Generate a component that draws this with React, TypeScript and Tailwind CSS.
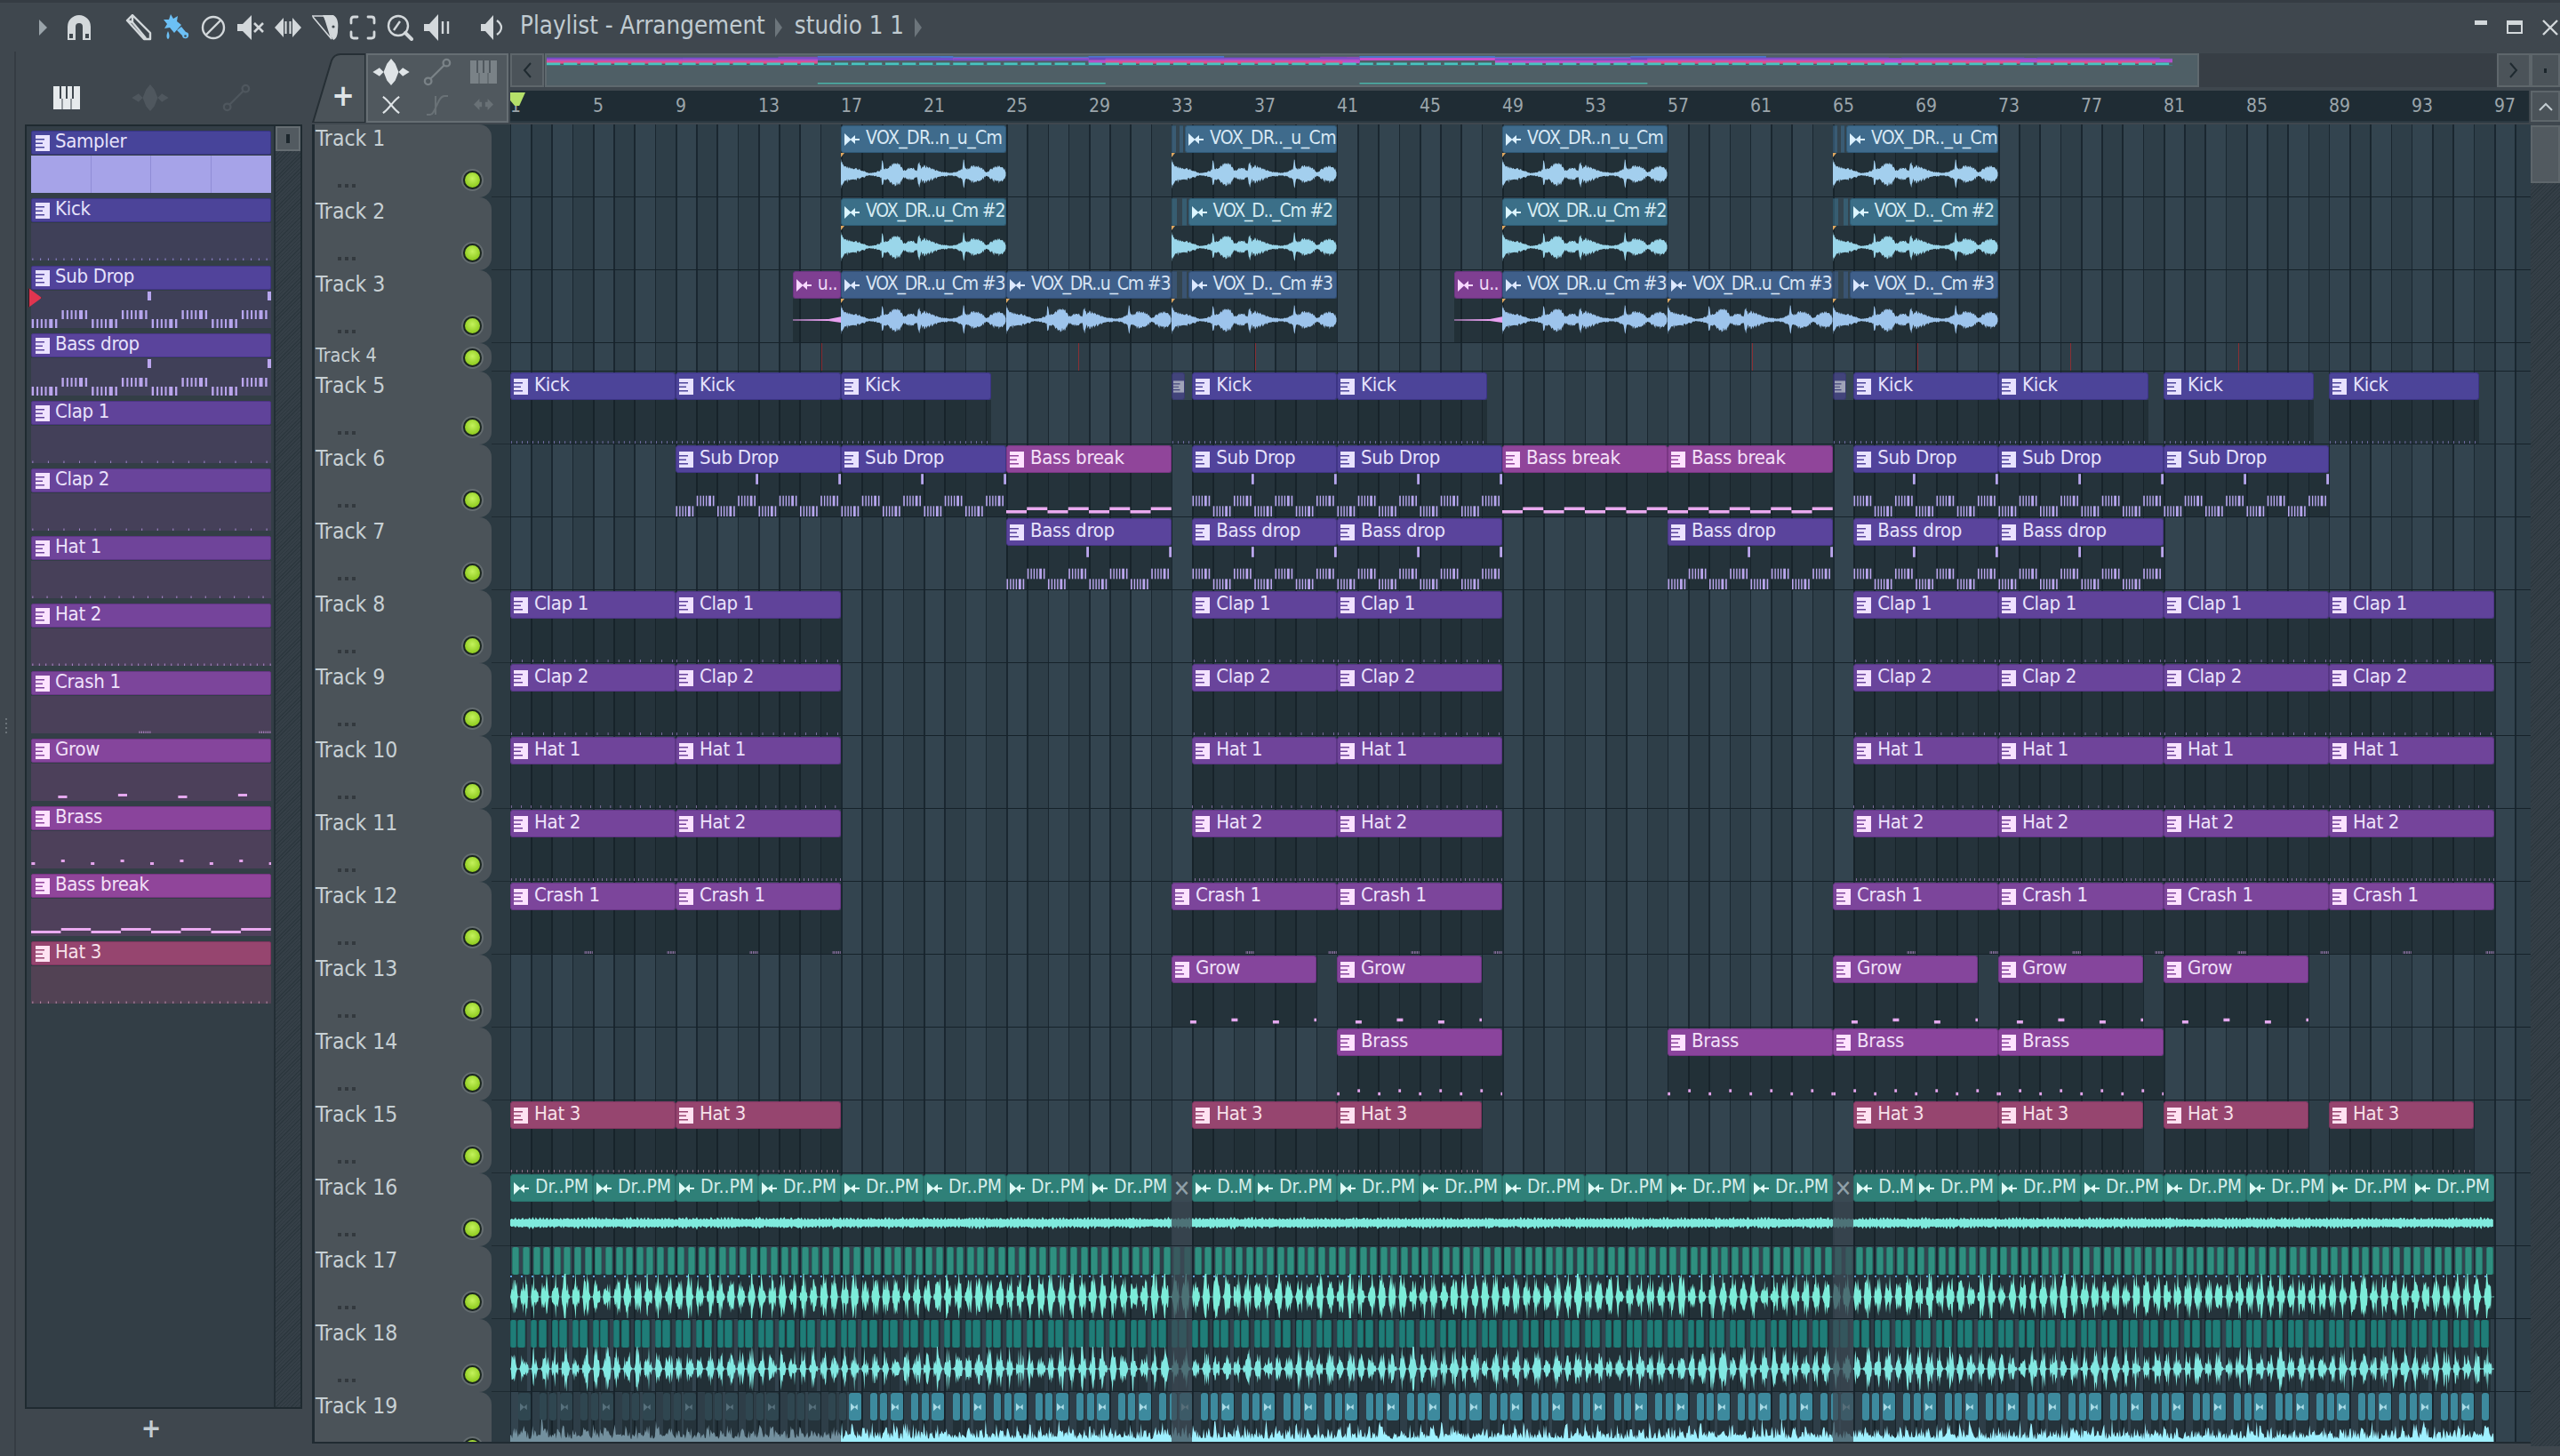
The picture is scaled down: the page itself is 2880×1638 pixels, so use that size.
import React from "react";

const BAR = 23.25;
const barX = (b: number) => (b - 1) * BAR;

// seeded noise so the waves stay the same every render
let seed = 7;
const rnd = () => {
  seed = (seed * 9301 + 49297) % 233280;
  return seed / 233280;
};

type Tone = { hd: string; text: string; icon: string; note: string; ov: string };

const TONES: Record<string, Tone> = {
  vox1: { hd: "bg-[#3f6b8c] border-[#2f5876]", text: "text-[#d8e8f4]", icon: "#dcf1ff", note: "#a3cfee", ov: "#4a78c8" },
  vox2: { hd: "bg-[#3b6f88] border-[#2d5c74]", text: "text-[#d6ebf2]", icon: "#dcf6ff", note: "#9ad6ea", ov: "#4a78c8" },
  vox3: { hd: "bg-[#3f5f8a] border-[#314e76]", text: "text-[#d8e4f4]", icon: "#dce8ff", note: "#9dc4ec", ov: "#4a78c8" },
  uu: { hd: "bg-[#7f3f92] border-[#6a3380]", text: "text-[#f0d8f6]", icon: "#f8d8ff", note: "#e8a0f0", ov: "#8a50b0" },
  Kick: { hd: "bg-[#4c4499] border-[#3b3484]", text: "text-[#e6e2fb]", icon: "#e8e2ff", note: "#8e86cc", ov: "#6a4cc0" },
  "Sub Drop": { hd: "bg-[#51439b] border-[#403585]", text: "text-[#e6e2fb]", icon: "#e8e2ff", note: "#b7a6ee", ov: "#7050c8" },
  "Bass drop": { hd: "bg-[#5a449c] border-[#483686]", text: "text-[#e6e2fb]", icon: "#ebe2ff", note: "#bba6ee", ov: "#7a50c8" },
  "Clap 1": { hd: "bg-[#60439a] border-[#4e3586]", text: "text-[#e9e2fb]", icon: "#f0e2ff", note: "#9c86c8", ov: "#8a50c8" },
  "Clap 2": { hd: "bg-[#69449b] border-[#573685]", text: "text-[#ebe2fb]", icon: "#f4e2ff", note: "#a086c8", ov: "#9050c8" },
  "Hat 1": { hd: "bg-[#6f449a] border-[#5c3685]", text: "text-[#ece2fb]", icon: "#f8e2ff", note: "#a688c8", ov: "#a050c8" },
  "Hat 2": { hd: "bg-[#75449b] border-[#623685]", text: "text-[#eee2fb]", icon: "#fbe2ff", note: "#ac88c8", ov: "#a850c8" },
  "Crash 1": { hd: "bg-[#7c459b] border-[#683685]", text: "text-[#efe2fb]", icon: "#fde2ff", note: "#b48ac8", ov: "#b050c8" },
  Grow: { hd: "bg-[#85459c] border-[#703686]", text: "text-[#f0e0f8]", icon: "#fde2ff", note: "#e4a8ee", ov: "#b850c8" },
  Brass: { hd: "bg-[#8a449c] border-[#753686]", text: "text-[#f2e0f8]", icon: "#ffe2ff", note: "#e4a4ec", ov: "#c050c8" },
  "Bass break": { hd: "bg-[#90459a] border-[#7a3684]", text: "text-[#f4e0f8]", icon: "#ffe2ff", note: "#eaaaf0", ov: "#c850c8" },
  "Hat 3": { hd: "bg-[#96456f] border-[#803560]", text: "text-[#f6e0ea]", icon: "#ffe2f2", note: "#b98aa8", ov: "#e0508c" },
  Sampler: { hd: "bg-[#47449a] border-[#373484]", text: "text-[#e6e2fb]", icon: "#e8e2ff", note: "#a6a3e8", ov: "#5a4cc0" },
};

// one pattern is 8 bars, 100 units to the bar; y runs 0..42
type Note = [number, number, number, number];

const melody = (): Note[] => {
  const out: Note[] = [];
  const gaps = [[2, 7], [18, 6], [32, 6], [46, 6], [60, 12], [80, 7]];
  for (let k = 0; k < 17; k++) {
    const up = k % 2 === 1;
    gaps.forEach(([g, w]) => out.push([k * 100 + g, up ? 22 : 32, w, 10]));
    if (k % 4 === 3) out.push([k * 100 + 88, 1, 12, 10]);
  }
  return out;
};

const ticks = (step: number, h = 2.5, w = 3): Note[] => {
  const out: Note[] = [];
  for (let x = 4; x < 1700; x += step) out.push([x, 42 - h, w, h]);
  return out;
};

const crash = (): Note[] => {
  const out: Note[] = [];
  [360, 760, 1160, 1560].forEach((c) => {
    for (let i = 0; i < 6; i++) out.push([c + i * 7, 39.5, 3, 2.5]);
  });
  return out;
};

const grow = (): Note[] =>
  [0.9, 2.9, 4.9, 6.9, 8.9, 10.9, 12.9, 14.9].map((b, i) => [b * 100, i % 2 ? 34 : 36, 30, 3] as Note);

const brass = (): Note[] =>
  Array.from({ length: 17 }, (_, i) => [i * 99 + 1, i % 2 ? 32 : 35, 12, 3] as Note);

const bassBreak = (): Note[] =>
  Array.from({ length: 17 }, (_, i) => [i * 100, i % 2 ? 33 : 36, 99, 3] as Note);

const PATTERNS: Record<string, Note[]> = {
  Kick: ticks(26),
  "Sub Drop": melody(),
  "Bass drop": melody(),
  "Clap 1": ticks(52),
  "Clap 2": ticks(52),
  "Hat 1": ticks(48),
  "Hat 2": ticks(22),
  "Crash 1": crash(),
  Grow: grow(),
  Brass: brass(),
  "Bass break": bassBreak(),
  "Hat 3": ticks(26),
};

// vocal wave loudness over the 8 bar sample
const ENV: [number, number][] = [
  [0, 0.95], [0.02, 0.48], [0.05, 0.38], [0.09, 0.36], [0.13, 0.2], [0.17, 0.07], [0.2, 0.1], [0.23, 0.2],
  [0.245, 0.3], [0.25, 1], [0.262, 0.3], [0.3, 0.52], [0.33, 0.62], [0.36, 0.55], [0.38, 0.22], [0.4, 0.3], [0.43, 0.42],
  [0.46, 0.18], [0.47, 0.75], [0.485, 0.4], [0.5, 0.5], [0.53, 0.42], [0.56, 0.3], [0.6, 0.16], [0.66, 0.08], [0.7, 0.16],
  [0.735, 0.3], [0.74, 1], [0.755, 0.32], [0.8, 0.46], [0.83, 0.52], [0.86, 0.3], [0.88, 0.12], [0.93, 0.42], [0.96, 0.46],
  [0.99, 0.3], [1, 0.05],
];

const envAt = (f: number) => {
  for (let i = 1; i < ENV.length; i++) {
    if (f <= ENV[i][0]) {
      const [a, av] = ENV[i - 1];
      const [b, bv] = ENV[i];
      return av + ((f - a) / (b - a)) * (bv - av);
    }
  }
  return 0;
};

const mirrored = (from: number, to: number, step: number, c: number, amp: (x: number) => number) => {
  const top: string[] = [];
  const bot: string[] = [];
  for (let x = from; x <= to; x += step) {
    const a = amp(x);
    top.push(`${x.toFixed(1)} ${(c - a).toFixed(1)}`);
    bot.unshift(`${x.toFixed(1)} ${(c + a * (0.75 + rnd() * 0.35)).toFixed(1)}`);
  }
  return `M${top.join("L")}L${bot.join("L")}Z`;
};

const VOX_PATH = mirrored(0, 186, 0.7, 25, (x) => {
  const e = envAt(x / 186);
  return 21 * e * (0.72 + rnd() * 0.4);
});

const END = barX(97);
const T16_PATH = mirrored(0, END, 1.2, 25, (x) => 3.4 + 2.8 * Math.abs(Math.sin(x * 0.8)) * (0.4 + rnd()));
const T17_PATH = mirrored(0, END, 0.8, 26, (x) => {
  const p = (x % (BAR / 2)) / (BAR / 2);
  const e = p < 0.72 ? Math.pow(Math.sin((Math.PI * p) / 0.72), 0.6) : 0.02;
  const spike = rnd() > 0.8 ? 1.3 : 0.25 + rnd() * 0.75;
  return 22 * e * spike;
});
const T18_PATH = mirrored(0, END, 0.8, 25, (x) => {
  const p = (x % BAR) / BAR;
  const spike = rnd() > 0.8 ? 1.25 : 0.2 + rnd() * 0.7;
  if (p < 0.34) return 21 * Math.sin((Math.PI * p) / 0.34) * spike;
  if (p > 0.46 && p < 0.9) return 21 * Math.sin((Math.PI * (p - 0.46)) / 0.44) * spike;
  return 0.6;
});

const spikes = (from: number, to: number) => {
  let d = `M${from} 34`;
  for (let x = from; x <= to; x += 1.1) {
    const p = (x % (BAR / 2)) / (BAR / 2);
    const h = (1 - p * 0.75) * 25 * rnd() * (0.5 + rnd() * 0.6) + 5;
    d += `L${x.toFixed(1)} ${(27 - h).toFixed(1)}`;
  }
  return `${d}L${to} 34Z`;
};
const T19_DIM = spikes(0, barX(17));
const T19_LIT = spikes(barX(17), END);

type ClipData = { s: number; e: number; hs?: number; label: string; kind: "midi" | "audio"; tone: string; frag?: boolean };
type Track = { n: number; small?: boolean; clips: ClipData[] };

const midi = (name: string, spans: number[][]): ClipData[] =>
  spans.map(([s, e, hs]) => ({ s, e, hs, label: name, kind: "midi" as const, tone: name, frag: hs !== undefined && name === "Kick" }));

const vox = (tone: string, a: string, b: string, spans: number[][]): ClipData[] =>
  spans.map(([s, e, hs]) => ({ s, e, hs, label: hs ? b : a, kind: "audio" as const, tone, frag: !!hs }));

const FULL = [[1, 9], [9, 17], [34, 41], [41, 49], [66, 73], [73, 81], [81, 89], [89, 97]];

const T1_SPANS = [[17, 25], [33, 41, 33.8], [49, 57], [65, 73, 65.8]];

const tracks: Track[] = [
  {
    n: 1,
    clips: [
      { s: 17, e: 25, label: "VOX_DR..n_u_Cm", kind: "audio", tone: "vox1" },
      { s: 33, e: 41, hs: 33.8, label: "VOX_DR.._u_Cm", kind: "audio", tone: "vox1", frag: true },
      { s: 49, e: 57, label: "VOX_DR..n_u_Cm", kind: "audio", tone: "vox1" },
      { s: 65, e: 73, hs: 65.8, label: "VOX_DR.._u_Cm", kind: "audio", tone: "vox1", frag: true },
    ],
  },
  { n: 2, clips: vox("vox2", "VOX_DR..u_Cm #2", "VOX_D.._Cm #2", T1_SPANS) },
  {
    n: 3,
    clips: [
      { s: 14.67, e: 17, label: "u..", kind: "audio", tone: "uu" },
      ...vox("vox3", "VOX_DR..u_Cm #3", "VOX_D.._Cm #3", [[17, 25], [25, 33], [33, 41, 33.8]]),
      { s: 46.67, e: 49, label: "u..", kind: "audio", tone: "uu" },
      ...vox("vox3", "VOX_DR..u_Cm #3", "VOX_D.._Cm #3", [[49, 57], [57, 65], [65, 73, 65.8]]),
    ],
  },
  { n: 4, small: true, clips: [] },
  {
    n: 5,
    clips: midi("Kick", [[1, 9], [9, 17], [17, 24.25], [33, 41, 34], [41, 48.25], [65, 73, 66], [73, 80.25], [81, 88.25], [89, 96.25]]),
  },
  {
    n: 6,
    clips: [
      ...midi("Sub Drop", [[9, 17], [17, 25]]),
      ...midi("Bass break", [[25, 33]]),
      ...midi("Sub Drop", [[34, 41], [41, 49]]),
      ...midi("Bass break", [[49, 57], [57, 65]]),
      ...midi("Sub Drop", [[66, 73], [73, 81], [81, 89]]),
    ],
  },
  { n: 7, clips: midi("Bass drop", [[25, 33], [34, 41], [41, 49], [57, 65], [66, 73], [73, 81]]) },
  { n: 8, clips: midi("Clap 1", FULL) },
  { n: 9, clips: midi("Clap 2", FULL) },
  { n: 10, clips: midi("Hat 1", FULL) },
  { n: 11, clips: midi("Hat 2", FULL) },
  { n: 12, clips: midi("Crash 1", [[1, 9], [9, 17], [33, 41], [41, 49], [65, 73], [73, 81], [81, 89], [89, 97]]) },
  { n: 13, clips: midi("Grow", [[33, 40], [41, 48], [65, 72], [73, 80], [81, 88]]) },
  { n: 14, clips: midi("Brass", [[41, 49], [57, 65], [65, 73], [73, 81]]) },
  { n: 15, clips: midi("Hat 3", [[1, 9], [9, 17], [34, 41], [41, 48], [66, 73], [73, 80], [81, 88], [89, 96]]) },
  { n: 16, clips: [] },
  { n: 17, clips: [] },
  { n: 18, clips: [] },
  { n: 19, clips: [] },
];

const DRUM_STARTS = [1, 5, 9, 13, 17, 21, 25, 29, 34, 37, 41, 45, 49, 53, 57, 61, 66, 69, 73, 77, 81, 85, 89, 93];
const RED_TICKS = [16.05, 28.5, 37.05, 61.1, 69.1, 76.5, 84.6];
const LIST = ["Sampler", "Kick", "Sub Drop", "Bass drop", "Clap 1", "Clap 2", "Hat 1", "Hat 2", "Crash 1", "Grow", "Brass", "Bass break", "Hat 3"];
const LIST_BODY: Record<string, string> = {
  Sampler: "bg-[#a6a3e8]",
  Kick: "bg-[#3f4058]",
  "Sub Drop": "bg-[#3f4058]",
  "Bass drop": "bg-[#404058]",
  "Clap 1": "bg-[#434059]",
  "Clap 2": "bg-[#454059]",
  "Hat 1": "bg-[#474059]",
  "Hat 2": "bg-[#494059]",
  "Crash 1": "bg-[#4a4059]",
  Grow: "bg-[#4c405a]",
  Brass: "bg-[#4d405a]",
  "Bass break": "bg-[#4f405b]",
  "Hat 3": "bg-[#524254]",
};

const PianoGlyph = ({ color, className = "" }: { color: string; className?: string }) => (
  <svg viewBox="0 0 16 18" className={`w-[16px] h-[18px] shrink-0 ${className}`}>
    <path fillRule="evenodd" fill={color} d="M0 0H16V18H0ZM0 4H10V5.5H0ZM0 8.5H8V10H0ZM0 13H10V14.5H0Z" />
  </svg>
);

const AudioGlyph = ({ color }: { color: string }) => (
  <svg viewBox="0 0 17 14" className="w-[17px] h-[14px] shrink-0">
    <path fill={color} d="M0 0L7.5 7L0 14ZM6.5 7L12 2V6H17V8H12V12Z" />
  </svg>
);

const Notes = ({ name, off, len }: { name: string; off: number; len: number }) => (
  <svg viewBox={`${off * 100} 0 ${len * 100} 42`} preserveAspectRatio="none" className="absolute inset-0 w-full h-full">
    {(PATTERNS[name] ?? []).map(([x, y, w, h], i) => (
      <rect key={i} x={x} y={y} width={w} height={h} fill={TONES[name].note} />
    ))}
  </svg>
);

function ClipView({ c }: { c: ClipData }) {
  const t = TONES[c.tone];
  const hs = c.hs ?? c.s;
  const offset = (hs - c.s) * BAR;
  const squeeze = c.kind !== "audio" ? "text-[22px] tracking-[-0.3px]" : c.label.includes("#") ? "text-[21px] tracking-[-1.2px]" : "text-[21px] tracking-[-0.6px]";
  return (
    <div className="absolute top-0 bottom-0 flex flex-col" style={{ left: barX(c.s), width: (c.e - c.s) * BAR }}>
      <div className="h-[31px] mt-px shrink-0 flex">
        {c.frag && c.kind === "audio" && (
          <>
            <div className={`w-[6px] border-y ${t.hd} opacity-60`} />
            <div className="w-[6px]" />
            <div className={`w-[5px] border-y ${t.hd} opacity-60`} />
          </>
        )}
        {c.frag && c.kind === "midi" && (
          <div className={`w-[15px] border rounded-[3px] ${t.hd} opacity-60 flex items-center justify-center`}>
            <PianoGlyph color={t.icon} className="scale-75" />
          </div>
        )}
        <div className="flex-1 flex" style={{ marginLeft: c.frag ? offset - (c.kind === "audio" ? 17 : 15) : 0 }}>
          <div className={`flex-1 min-w-0 flex items-center gap-[7px] pl-[3px] border rounded-[3px] ${t.hd} overflow-hidden`}>
            {c.kind === "midi" ? <PianoGlyph color={t.icon} /> : <AudioGlyph color={t.icon} />}
            <span className={`leading-[26px] mb-[4px] whitespace-nowrap ${squeeze} ${t.text}`}>{c.label}</span>
          </div>
        </div>
      </div>
      <div className="relative flex-1 bg-[#141e24]/45">
        {c.kind === "midi" ? (
          <Notes name={c.tone} off={(c.s - 1) % 8} len={c.e - c.s} />
        ) : c.tone === "uu" ? (
          <svg viewBox="0 0 54 51" preserveAspectRatio="none" className="absolute inset-0 w-full h-full">
            <path fill={t.note} d="M0 24.5L40 24L54 21V28L40 26L0 25.5Z" />
          </svg>
        ) : (
          <>
            <svg viewBox="0 0 186 51" preserveAspectRatio="none" className="absolute inset-0 w-full h-full">
              <path fill={t.note} d={VOX_PATH} />
            </svg>
            <div className="absolute top-0 left-0 w-0 h-0 border-t-[5px] border-r-[4px] border-t-[#e0a860] border-r-transparent" />
          </>
        )}
      </div>
    </div>
  );
}

const MutedBand = () => (
  <>
    <div className="absolute top-0 bottom-0 bg-[#3c4a54]/75" style={{ left: barX(33), width: BAR }} />
    <div className="absolute top-0 bottom-0 bg-[#3c4a54]/75" style={{ left: barX(65), width: BAR }} />
  </>
);

function DrumLane() {
  return (
    <>
      <div className="absolute left-0 top-[31px] bottom-0 bg-[#141e24]/45" style={{ width: END }} />
      {DRUM_STARTS.map((s) => {
        const short = s === 34 || s === 66;
        return (
          <div
            key={s}
            className="absolute top-px h-[31px] flex items-center gap-[7px] pl-[3px] border rounded-[3px] bg-[#2f8078] border-[#28706a] overflow-hidden"
            style={{ left: barX(s), width: short ? 3 * BAR : 4 * BAR }}
          >
            <AudioGlyph color="#dffaf6" />
            <span className={`text-[21px] leading-[26px] mb-[4px] text-[#d4ece8] whitespace-nowrap ${short ? "tracking-[-1px]" : ""}`}>
              {short ? "D..M" : "Dr..PM"}
            </span>
          </div>
        );
      })}
      {[33, 65].map((s) => (
        <div
          key={s}
          className="absolute top-px h-[31px] rounded-[3px] bg-[#3a4a53] flex items-center justify-center text-[26px] leading-none text-[#8fa0a8]"
          style={{ left: barX(s), width: BAR }}
        >
          ✕
        </div>
      ))}
      <svg viewBox={`0 0 ${END} 51`} preserveAspectRatio="none" className="absolute left-0 top-[31px] h-[51px]" style={{ width: END }}>
        <path fill="#7feadd" d={T16_PATH} />
      </svg>
      <div className="absolute top-[31px] bottom-0 bg-[#3c4a54]/75" style={{ left: barX(33), width: BAR }} />
      <div className="absolute top-[31px] bottom-0 bg-[#3c4a54]/75" style={{ left: barX(65), width: BAR }} />
    </>
  );
}

function HalfBarLane() {
  const starts = Array.from({ length: 192 }, (_, i) => 1.1 + i / 2);
  return (
    <>
      <div className="absolute left-0 top-[31px] bottom-0 bg-[#141e24]/45" style={{ width: END }} />
      {starts.map((s, i) => (
        <div
          key={i}
          className="absolute top-px h-[31px] w-[8px] rounded-[2px] bg-[#2f8f80] border-x border-[#247568]"
          style={{ left: barX(s) }}
        />
      ))}
      {starts.map((s, i) => (
        <div key={i} className="absolute top-[33px] w-[2px] h-[2px] bg-[#5aa0e0]" style={{ left: barX(s) - 2 }} />
      ))}
      <svg viewBox={`0 0 ${END} 51`} preserveAspectRatio="none" className="absolute left-0 top-[31px] h-[51px]" style={{ width: END }}>
        <path fill="#7cecd9" d={T17_PATH} />
      </svg>
      <MutedBand />
    </>
  );
}

function DoubleLane() {
  const segs: [number, number][] = [];
  for (let b = 1; b < 97; b++) {
    segs.push([b, 7], [b + 0.36, 9]);
  }
  return (
    <>
      {segs.map(([s, w], i) => (
        <div key={i} className="absolute top-0 bottom-0 bg-[#141e24]/45" style={{ left: barX(s), width: w + 2 }}>
          <div className="mt-px h-[31px] rounded-[2px] bg-[#1f7d78] border-x border-[#1a6a66]" style={{ width: w }} />
        </div>
      ))}
      <svg viewBox={`0 0 ${END} 51`} preserveAspectRatio="none" className="absolute left-0 top-[31px] h-[51px]" style={{ width: END }}>
        <path fill="#82e8e2" d={T18_PATH} />
      </svg>
      <MutedBand />
    </>
  );
}

function SliceLane() {
  const segs: { s: number; w: number; wide: boolean }[] = [];
  for (let b = 0; b < 96; b += 2) {
    segs.push({ s: b + 1.4, w: 14, wide: true }, { s: b + 2.4, w: 8, wide: false });
    if (b + 2.9 < 96.6) segs.push({ s: b + 2.9, w: 8, wide: false });
  }
  return (
    <>
      {segs.map(({ s, w, wide }, i) => {
        const lit = s >= 17;
        return (
          <div key={i} className="absolute top-0 bottom-0 bg-[#141e24]/45" style={{ left: barX(s), width: w + 1 }}>
            <div
              className={`mt-px h-[31px] rounded-[3px] flex items-center justify-center ${lit ? "bg-[#3d8a9e]" : "bg-[#2f4650]"}`}
              style={{ width: w }}
            >
              {wide && (
                <svg viewBox="0 0 17 14" className="w-[11px] h-[14px]">
                  <path fill={lit ? "#a9dbe6" : "#57707c"} d="M0 0L7.5 7L0 14ZM6.5 7L12 2V12Z" />
                </svg>
              )}
            </div>
          </div>
        );
      })}
      <svg viewBox={`0 0 ${END} 51`} preserveAspectRatio="none" className="absolute left-0 top-[31px] h-[51px]" style={{ width: END }}>
        <path fill="#73909e" d={T19_DIM} />
        <path fill="#9ff0ff" d={T19_LIT} />
      </svg>
      <MutedBand />
    </>
  );
}

const Led = () => (
  <div className="w-[21px] h-[21px] rounded-full border-2 border-[#1b2620] ring-2 ring-[#646c70] bg-[radial-gradient(circle_at_50%_40%,#c4f25c,#8ecb1e_75%)]" />
);

function TrackRow({ t }: { t: Track }) {
  return (
    <div className={`flex shrink-0 ${t.small ? "h-[32px]" : "h-[82px]"}`}>
      {t.small ? (
        <div className="w-[199px] shrink-0 bg-[#4b5359] rounded-r-[14px] flex items-center justify-between pl-[1px] pr-[11px]">
          <span className="text-[21.5px] leading-none mb-[4px] text-[#c7d0d4]">Track {t.n}</span>
          <Led />
        </div>
      ) : (
        <div className="w-[199px] shrink-0 bg-[#4b5359] rounded-r-[14px] flex flex-col pl-[1px] pr-[11px] pb-[9px]">
          <span className="text-[24.5px] leading-[26px] mt-[3px] text-[#c7d0d4]">Track {t.n}</span>
          <div className="mt-auto flex items-end justify-between">
            <div className="flex gap-[4px] ml-[25px] mb-[2px]">
              <div className="w-[4px] h-[4px] bg-[#33393e]" />
              <div className="w-[4px] h-[4px] bg-[#33393e]" />
              <div className="w-[4px] h-[4px] bg-[#33393e]" />
            </div>
            <Led />
          </div>
        </div>
      )}
      <div className="w-[21px] shrink-0 border-b border-[#1d2a31]" />
      <div className="relative flex-1 border-b border-[#16222a] overflow-hidden bg-[repeating-linear-gradient(90deg,#1a2730_0,#1a2730_1.5px,#33444f_1.5px,#33444f_23.25px,#1a2730_23.25px,#1a2730_24.75px,#2e3e48_24.75px,#2e3e48_46.5px)]">
        {t.n === 4 &&
          RED_TICKS.map((b) => <div key={b} className="absolute top-0 bottom-0 w-px bg-[#8a2f34]" style={{ left: barX(b) }} />)}
        {t.clips.map((c, i) => (
          <ClipView key={i} c={c} />
        ))}
        {t.n === 16 && <DrumLane />}
        {t.n === 17 && <HalfBarLane />}
        {t.n === 18 && <DoubleLane />}
        {t.n === 19 && <SliceLane />}
      </div>
    </div>
  );
}

function ListItem({ name }: { name: string }) {
  const t = TONES[name];
  return (
    <div className="h-[70px] shrink-0 flex flex-col">
      <div className={`h-[27px] shrink-0 flex items-center gap-[6px] pl-[4px] border rounded-[2px] ${t.hd}`}>
        <PianoGlyph color={t.icon} />
        <span className={`text-[22px] tracking-[-0.3px] leading-[26px] mb-[4px] ${t.text}`}>{name}</span>
      </div>
      <div className={`relative flex-1 mt-px ${LIST_BODY[name]}`}>
        {name === "Sampler" ? (
          <div className="absolute inset-0 grid grid-cols-4 divide-x divide-[#8f8cd6]">
            <div />
            <div />
            <div />
            <div />
          </div>
        ) : (
          <Notes name={name} off={0} len={8} />
        )}
        {name === "Sub Drop" && (
          <div className="absolute left-[-3px] top-[-3px] w-[15px] h-[22px] bg-[#e0354f] border border-[#3a1a22] [clip-path:polygon(0_0,100%_50%,0_100%)]" />
        )}
      </div>
    </div>
  );
}

const C = "#d3d8db";

const TopIcon = ({ children, className = "" }: { children: React.ReactNode; className?: string }) => (
  <svg viewBox="0 0 30 30" className={`w-[30px] h-[30px] shrink-0 ${className}`}>
    {children}
  </svg>
);

const WaveIcon = ({ color, className = "" }: { color: string; className?: string }) => (
  <svg viewBox="0 0 44 32" className={`w-[42px] h-[30px] ${className}`}>
    <path fill={color} d="M0 16L8 11L13 16L17 6L22 0L27 6L31 16L36 11L44 16L36 21L31 16L27 26L22 32L17 26L13 16L8 21Z" />
  </svg>
);

const LinkIcon = ({ color, className = "" }: { color: string; className?: string }) => (
  <svg viewBox="0 0 34 34" className={`w-[32px] h-[32px] ${className}`} fill="none" stroke={color} strokeWidth="2.5">
    <circle cx="6" cy="28" r="4" />
    <circle cx="28" cy="6" r="4" />
    <path d="M9 25L25 9" />
  </svg>
);

const PianoIcon = ({ color, bg, className = "" }: { color: string; bg: string; className?: string }) => (
  <svg viewBox="0 0 30 26" className={`w-[30px] h-[26px] ${className}`}>
    <rect width="30" height="26" fill={color} />
    <rect x="7" y="0" width="2" height="14" fill={bg} />
    <rect x="14" y="0" width="2" height="14" fill={bg} />
    <rect x="21" y="0" width="2" height="14" fill={bg} />
    <rect x="9.5" y="14" width="1" height="12" fill={bg} />
    <rect x="19.5" y="14" width="1" height="12" fill={bg} />
  </svg>
);

function TitleBar() {
  return (
    <div className="h-[58px] shrink-0 flex items-center border-t-[3px] border-[#353c43] pl-[33px] pr-[2px]">
      <TopIcon>
        <path fill="#9aa4aa" d="M11 6L20 15L11 24Z" />
      </TopIcon>
      <TopIcon className="ml-[11px]">
        <path fill={C} d="M2 29V14a13 13 0 0 1 26 0V29H19V14a4 4 0 0 0-8 0V29Z" />
        <path fill="#3f474e" d="M4 22H8V27H4ZM22 22H26V27H22Z" />
      </TopIcon>
      <div className="flex items-center gap-[12px] ml-[37px]">
        <TopIcon>
          <path fill="none" stroke={C} strokeWidth="2.4" strokeLinejoin="round" d="M2 7L8 1L28 21V28H21ZM2 7L8 9L8 1M8 9L23 27" />
        </TopIcon>
        <TopIcon>
          <path fill="#6cc0f5" d="M9 0L12 5L17 2L16 8L21 12L13 21L8 15L2 16L5 11L1 6L7 6ZM16 18L21 14L26 20A3.6 3.6 0 1 1 22 24ZM6 19C8 23 8 27 6 28C4 27 4 23 6 19Z" />
          <circle cx="25.5" cy="24.5" r="1.3" fill="#3f474e" />
        </TopIcon>
        <TopIcon>
          <circle cx="15" cy="15" r="12" fill="none" stroke={C} strokeWidth="2.4" />
          <path d="M7 23L23 7" stroke={C} strokeWidth="2.4" />
        </TopIcon>
        <TopIcon>
          <path fill={C} d="M0 11H6L16 1V29L6 19H0Z" />
          <path stroke={C} strokeWidth="2.6" d="M19 10L29 20M29 10L19 20" />
        </TopIcon>
        <TopIcon>
          <path fill={C} d="M0 15L10 4V26ZM30 15L20 4V26Z" />
          <path stroke={C} strokeWidth="2.2" d="M12.5 8V22M17.5 8V22" />
        </TopIcon>
        <TopIcon>
          <path fill="none" stroke={C} strokeWidth="1.6" d="M0 2H14L22 28L1 3" />
          <path fill={C} d="M12 1H24C29 4 30 10 29 18C29 24 27 28 24 29C21 25 19 18 16 9Z" />
          <circle cx="24" cy="14" r="1.6" fill="#3f474e" />
        </TopIcon>
        <TopIcon>
          <path fill="none" stroke={C} strokeWidth="2.8" strokeLinecap="round" d="M9 3H5Q2 3 2 6V10M21 3H25Q28 3 28 6V10M9 27H5Q2 27 2 24V20M21 27H25Q28 27 28 24V20" />
        </TopIcon>
        <TopIcon>
          <circle cx="13" cy="13" r="11" fill="none" stroke={C} strokeWidth="2.4" />
          <path d="M8 18L15 8" stroke={C} strokeWidth="2.4" />
          <path d="M21 21L28 28" stroke={C} strokeWidth="4" strokeLinecap="round" />
        </TopIcon>
        <TopIcon>
          <path fill={C} d="M0 11H6L16 0V30L6 19H0Z" />
          <path stroke={C} strokeWidth="2.4" d="M21 8V22M27 8V22" />
        </TopIcon>
      </div>
      <TopIcon className="ml-[33px]">
        <path fill={C} d="M1 11H6L15 1V29L6 19H1Z" />
        <path fill="none" stroke={C} strokeWidth="2.2" d="M19 7C23 10 24 12 24 15C24 18 23 20 19 23" />
      </TopIcon>
      <span className="ml-[15px] text-[27.5px] leading-none mb-[4px] text-[#c0cbd1] whitespace-nowrap">Playlist - Arrangement</span>
      <svg viewBox="0 0 8 24" className="w-[8px] h-[24px] ml-[11px]">
        <path fill="#6c757b" d="M0 1L8 12L0 23Z" />
      </svg>
      <span className="ml-[14px] text-[27.5px] leading-none mb-[4px] text-[#c0cbd1] whitespace-nowrap">studio 1 1</span>
      <svg viewBox="0 0 8 24" className="w-[8px] h-[24px] ml-[12px]">
        <path fill="#6c757b" d="M0 1L8 12L0 23Z" />
      </svg>
      <div className="ml-auto flex items-center gap-[22px]">
        <div className="w-[14px] h-[5px] bg-[#d3d8db] mb-[10px]" />
        <div className="w-[18px] h-[15px] border-2 border-t-[5px] border-[#d3d8db]" />
        <svg viewBox="0 0 18 18" className="w-[18px] h-[18px]">
          <path stroke="#d3d8db" strokeWidth="2.4" d="M1 1L17 17M17 1L1 17" />
        </svg>
      </div>
    </div>
  );
}

function LeftPanel() {
  return (
    <div className="w-[351px] shrink-0 flex pl-[16px] relative">
      <div className="w-[2px] bg-[#353c43]" />
      <div className="flex-1 flex flex-col pl-[10px]">
        <div className="h-[82px] shrink-0 flex items-center">
          <PianoIcon color="#e6eaec" bg="#3f474e" className="ml-[32px] mt-[22px]" />
          <WaveIcon color="#4f575e" className="ml-[58px] mt-[22px]" />
          <LinkIcon color="#4f575e" className="ml-[60px] mt-[22px]" />
        </div>
        <div className="h-[1445px] w-[312px] shrink-0 flex border-2 border-[#1f2a30] bg-[#333e46]">
          <div className="w-[278px] shrink-0 flex flex-col gap-[6px] pl-[5px] pr-[3px] pt-[5px]">
            {LIST.map((n) => (
              <ListItem key={n} name={n} />
            ))}
          </div>
          <div className="flex-1 flex flex-col border-l-2 border-[#232e35]">
            <div className="h-[28px] shrink-0 bg-[#525a60] border-2 border-[#656d72] flex items-center justify-center">
              <div className="w-[4px] h-[10px] bg-[#1c262c]" />
            </div>
            <div className="flex-1 bg-[repeating-linear-gradient(135deg,#2c373e_0,#2c373e_1px,#353f47_1px,#353f47_3px)]" />
          </div>
        </div>
        <div className="flex-1 flex items-center justify-center pb-[10px] w-[284px]">
          <span className="text-[30px] font-bold leading-none text-[#c3ccd1]">+</span>
        </div>
      </div>
      <div className="absolute left-[6px] top-[750px] flex flex-col gap-[3px]">
        <div className="w-[2px] h-[2px] bg-[#6b7379]" />
        <div className="w-[2px] h-[2px] bg-[#6b7379]" />
        <div className="w-[2px] h-[2px] bg-[#6b7379]" />
        <div className="w-[2px] h-[2px] bg-[#6b7379]" />
      </div>
    </div>
  );
}

function Overview() {
  const r = 1829 / 96;
  const x = (b: number) => (b - 1) * r;
  return (
    <svg viewBox="0 0 1857 34" className="w-[1857px] h-[34px]">
      {tracks.map((t, i) =>
        t.clips.map((c, j) => (
          <rect key={`${i}-${j}`} x={x(c.s)} y={1 + i * 0.4} width={(c.e - c.s) * r} height={3} fill={TONES[c.tone].ov} />
        ))
      )}
      {Array.from({ length: 96 }, (_, i) => (
        <rect key={i} x={x(i + 1)} y={8.5} width={r * 0.8} height={2.5} fill="#49c4c0" />
      ))}
      <rect x={0} y={11} width={x(97)} height={1} fill="#3a7d80" />
      <rect x={x(17)} y={31} width={x(34) - x(17)} height={1.5} fill="#4bb4a8" />
      <rect x={x(49)} y={31} width={x(66) - x(49)} height={1.5} fill="#4bb4a8" />
    </svg>
  );
}

function PlaylistHeader() {
  return (
    <div className="h-[82px] shrink-0 flex pt-[2px]">
      <div className="w-[60px] h-[78px] shrink-0 relative flex items-end justify-center pb-[14px] pl-[10px]">
        <svg viewBox="0 0 60 78" className="absolute inset-0 w-full h-full">
          <path fill="#4b5359" stroke="#262f35" strokeWidth="2" d="M1 78L22 8Q25 1 32 1H60V78Z" />
        </svg>
        <span className="relative text-[34px] font-bold leading-none text-[#dfe4e7]">+</span>
      </div>
      <div className="w-[160px] h-[78px] shrink-0 ml-[1px] bg-[#50585e] border-2 border-[#666e73] grid grid-cols-3 grid-rows-2 place-items-center">
        <WaveIcon color="#dfe4e7" />
        <LinkIcon color="#7a8287" />
        <PianoIcon color="#7a8287" bg="#50585e" />
        <svg viewBox="0 0 24 24" className="w-[20px] h-[24px]" fill="none" stroke="#dfe4e7" strokeWidth="2.4">
          <path d="M1 1C10 7 14 17 23 23M23 1C14 7 10 17 1 23" />
        </svg>
        <svg viewBox="0 0 24 24" className="w-[24px] h-[24px]" fill="none" stroke="#697176" strokeWidth="2">
          <path d="M0 23H4C10 23 12 2 20 2H24M10 2V23" />
        </svg>
        <svg viewBox="0 0 24 16" className="w-[22px] h-[15px]">
          <path fill="#697176" d="M0 8L7 1V5H10V11H7V15ZM24 8L17 1V5H14V11H17V15Z" />
        </svg>
      </div>
      <div className="ml-[2px] flex-1 flex flex-col">
        <div className="h-[42px] shrink-0 flex pb-[4px]">
          <div className="w-[38px] bg-[#4b5359] border-2 border-[#5e666b] flex items-center justify-center">
            <svg viewBox="0 0 10 18" className="w-[10px] h-[18px]" fill="none" stroke="#1f2a30" strokeWidth="2">
              <path d="M9 1L2 9L9 17" />
            </svg>
          </div>
          <div className="w-[1861px] ml-[1px] bg-[#4f5f66] border-2 border-[#5f696e]">
            <Overview />
          </div>
          <div className="flex-1 bg-[#373e45]" />
          <div className="w-[38px] bg-[#4b5359] border-2 border-[#5e666b] flex items-center justify-center">
            <svg viewBox="0 0 10 18" className="w-[10px] h-[18px]" fill="none" stroke="#1f2a30" strokeWidth="2">
              <path d="M1 1L8 9L1 17" />
            </svg>
          </div>
        </div>
        <div className="h-[36px] w-[2271px] relative flex bg-[#1f2c34] border-b-[2px] border-[#2b3841] overflow-hidden">
          {Array.from({ length: 25 }, (_, i) => (
            <span key={i} className="w-[93px] shrink-0 text-[21px] leading-[34px] text-[#9ba5ab]">
              {i * 4 + 1}
            </span>
          ))}
          <div className="absolute left-0 top-[2px] w-[17px] h-[15px] bg-[#b5e06a] [clip-path:polygon(0_0,100%_0,60%_100%,30%_100%,0_60%)]" />
        </div>
      </div>
    </div>
  );
}

export default function App() {
  return (
    <div className="w-[2880px] h-[1638px] overflow-hidden flex flex-col bg-[#3f474e] font-['DejaVu_Sans_Condensed','DejaVu_Sans',sans-serif]">
      <TitleBar />
      <div className="flex-1 flex min-h-0">
        <LeftPanel />
        <div className="flex-1 flex min-w-0">
          <div className="flex-1 flex flex-col min-w-0">
            <PlaylistHeader />
            <div className="h-[1484px] shrink-0 flex flex-col overflow-hidden border-l-[3px] border-[#202b32] border-b-[2px] bg-[#2c3a42]">
              {tracks.map((t) => (
                <TrackRow key={t.n} t={t} />
              ))}
            </div>
          </div>
          <div className="w-[33px] shrink-0 flex flex-col pt-[2px] gap-[4px]">
            <div className="h-[38px] shrink-0 bg-[#4b5359] border-2 border-[#5e666b] flex items-center justify-center">
              <div className="w-[3px] h-[5px] bg-[#1c262c]" />
            </div>
            <div className="h-[35px] shrink-0 bg-[#4b5359] border-2 border-[#5e666b] flex items-center justify-center">
              <svg viewBox="0 0 16 10" className="w-[16px] h-[10px]" fill="none" stroke="#c3ccd1" strokeWidth="2">
                <path d="M1 9L8 2L15 9" />
              </svg>
            </div>
            <div className="h-[1486px] flex flex-col">
              <div className="h-[65px] shrink-0 bg-[#525a60] border-2 border-[#5e666b]" />
              <div className="flex-1 bg-[repeating-linear-gradient(135deg,#2c373e_0,#2c373e_1px,#353f47_1px,#353f47_3px)]" />
            </div>
          </div>
        </div>
      </div>
    </div>
  );
}
